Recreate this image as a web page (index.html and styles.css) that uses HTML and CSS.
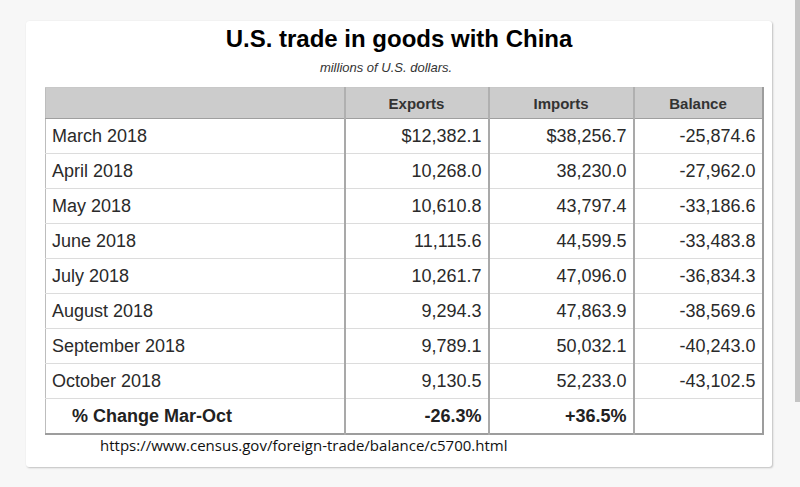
FILE: index.html
```html
<!DOCTYPE html>
<html>
<head>
<meta charset="utf-8">
<link rel="stylesheet" href="styles.css">
</head>
<body>
<div class="card">
  <h1 class="title">U.S. trade in goods with China</h1>
  <div class="subtitle">millions of U.S. dollars.</div>
  <table class="trade">
    <colgroup>
      <col class="c1"><col class="c2"><col class="c3"><col class="c4">
    </colgroup>
    <thead>
      <tr><th></th><th>Exports</th><th>Imports</th><th>Balance</th></tr>
    </thead>
    <tbody>
      <tr><td class="lbl">March 2018</td><td>$12,382.1</td><td>$38,256.7</td><td>-25,874.6</td></tr>
      <tr><td class="lbl">April 2018</td><td>10,268.0</td><td>38,230.0</td><td>-27,962.0</td></tr>
      <tr><td class="lbl">May 2018</td><td>10,610.8</td><td>43,797.4</td><td>-33,186.6</td></tr>
      <tr><td class="lbl">June 2018</td><td>11,115.6</td><td>44,599.5</td><td>-33,483.8</td></tr>
      <tr><td class="lbl">July 2018</td><td>10,261.7</td><td>47,096.0</td><td>-36,834.3</td></tr>
      <tr><td class="lbl">August 2018</td><td>9,294.3</td><td>47,863.9</td><td>-38,569.6</td></tr>
      <tr><td class="lbl">September 2018</td><td>9,789.1</td><td>50,032.1</td><td>-40,243.0</td></tr>
      <tr><td class="lbl">October 2018</td><td>9,130.5</td><td>52,233.0</td><td>-43,102.5</td></tr>
      <tr class="pct"><td class="lbl">% Change Mar-Oct</td><td>-26.3%</td><td>+36.5%</td><td></td></tr>
    </tbody>
  </table>
  <div class="url">https://www.census.gov/foreign-trade/balance/c5700.html</div>
</div>
<div class="scrollthumb"></div>
</body>
</html>
```

FILE: styles.css
```css
html, body {
  margin: 0;
  padding: 0;
}
body {
  background: #f7f7f7;
  width: 800px;
  height: 487px;
  overflow: hidden;
  position: relative;
  font-family: "Liberation Sans", Arial, sans-serif;
  color: #222;
}
.card {
  box-sizing: border-box;
  margin: 21px 0 0 26px;
  width: 746px;
  height: 446px;
  background: #fff;
  border-radius: 3px;
  box-shadow: 1px 1px 2px rgba(0,0,0,0.22), 0 0 1px rgba(0,0,0,0.08);
  padding-top: 4px;
}
.title {
  margin: 0;
  font-size: 24px;
  line-height: 28px;
  font-weight: bold;
  color: #000;
  text-align: center;
}
.subtitle {
  margin-top: 7px;
  font-size: 13px;
  line-height: 16px;
  font-style: italic;
  color: #333;
  text-align: center;
  padding-right: 26px;
}
.trade {
  margin: 11px 0 0 19px;
  width: 717px;
  border-collapse: collapse;
  table-layout: fixed;
  border-top: 1px solid #c8c8c8;
  border-left: 1px solid #bdbdbd;
  border-right: 2px solid #9d9d9d;
  border-bottom: 2px solid #9d9d9d;
}
.c1 { width: 299px; }
.c2 { width: 144px; }
.c3 { width: 145px; }
.c4 { width: 129px; }
.trade th {
  background: #cccccc;
  height: 30px;
  font-size: 15px;
  font-weight: bold;
  color: #333;
  text-align: center;
  padding: 0;
  border-left: 2px solid #b0b0b0;
  border-bottom: 1px solid #9f9f9f;
}
.trade th:first-child { border-left: none; }
.trade td {
  height: 34px;
  padding: 0 6px 0 6px;
  font-size: 18px;
  text-align: right;
  border-left: 2px solid #a9a9a9;
  border-bottom: 1px solid #dcdcdc;
  color: #2a2a2a;
}
.trade td.lbl {
  text-align: left;
  border-left: none;
  padding-left: 6px;
}
.trade tr.pct td {
  font-weight: bold;
  border-bottom: none;
  color: #222;
}
.trade tr.pct td.lbl {
  padding-left: 26px;
}
.url {
  margin-top: 0;
  padding-left: 74px;
  font-family: "Open Sans", "Noto Sans", sans-serif;
  font-size: 15px;
  line-height: 20px;
  color: #111;
}
.scrollthumb {
  position: absolute;
  right: 0;
  top: 0;
  width: 5px;
  height: 402px;
  background: #c4c4c4;
}
```
